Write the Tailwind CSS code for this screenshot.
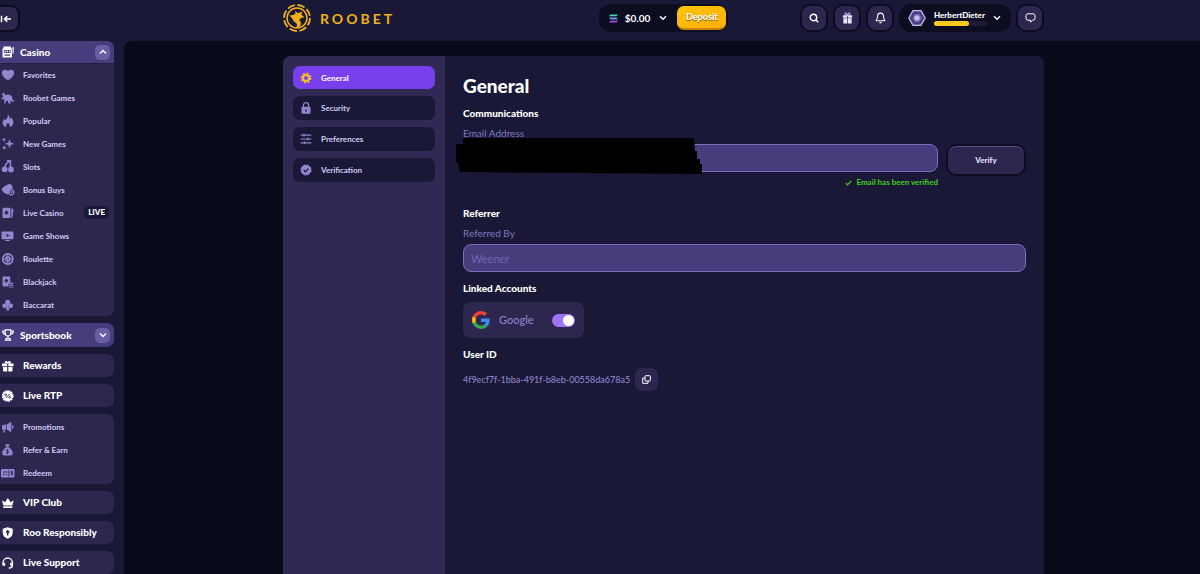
<!DOCTYPE html>
<html lang="en">
	<head>
		<meta charset="UTF-8" />
		<meta name="viewport" content="width=device-width, initial-scale=1.0" />
		<title>Roobet - General Settings</title>
		<script src="https://cdn.jsdelivr.net/npm/@tailwindcss/browser@4"></script>
	</head>
	<body class="bg-[#090b1b] text-white font-[Lato,'Noto_Sans',sans-serif] text-[8px] h-screen overflow-hidden flex flex-col">
		<!-- Top bar -->
		<header class="flex bg-[#191937] h-[41px] shrink-0">
			<div class="w-[124px] shrink-0 pt-[5px]">
				<button aria-label="Collapse menu" class="flex items-center w-[20px] h-[27px] rounded-r-[9px] border-[2px] border-l-0 border-[#0c0d20] bg-[#2d2750]">
					<svg class="w-[12px] h-[10px]" viewBox="0 0 12 10" fill="none" stroke="#fff" stroke-width="1.5">
						<path d="M1.5 1.8v6.4M11 5H5M7.3 2.2 4.5 5l2.8 2.8" />
					</svg>
				</button>
			</div>
			<div class="flex-1 flex justify-center pl-[3px]">
				<div class="w-full max-w-[761px] grid grid-cols-[1fr_auto_1fr] items-start pt-1">
					<a href="#" aria-label="Roobet home" class="flex items-center gap-[9px] text-[#efb01c]">
						<svg class="w-[28px] h-[28px]" viewBox="0 0 28 28" fill="none">
							<circle cx="14" cy="14" r="13" stroke="currentColor" stroke-width="1.8" stroke-dasharray="7.6 2.61" />
							<circle cx="14" cy="14" r="10" stroke="currentColor" stroke-width="1.5" />
							<path d="M6.500 11.500 10 11l2.500-1.200L12 6.800l2.500 2.200 4.800-1.200-1 2.700 3 2.700-3.300.8-1.800 2 1.800 2.500-.5 3.500-2 1.200-2.500.3 1.200-2.200-.7-1.800-2.800-2.300-2-3.500z" fill="currentColor" />
						</svg>
						<span class="text-[14px] font-bold tracking-[3px]">ROOBET</span>
					</a>
					<div class="flex items-center h-[28px] rounded-[12px] bg-[#0c0d20] pl-[10px] pr-[2px]">
						<svg class="w-[9px] h-[9px]" viewBox="0 0 9 9">
							<path d="M1.500.5H9L7.500 2.300H0z" fill="#2fe0b0" />
							<path d="M0 3.600h7.500L9 5.400H1.500z" fill="#6f95dc" />
							<path d="M1.500 6.700H9L7.500 8.500H0z" fill="#a44bf0" />
						</svg>
						<button class="flex items-center gap-[9px] ml-[7px] text-[10px] font-bold">
							$0.00
							<svg class="w-[8px] h-[6px]" viewBox="0 0 8 6" fill="none" stroke="#fff" stroke-width="1.4"><path d="m1 1.300 3 3 3-3" /></svg>
						</button>
						<button class="ml-[10px] w-[49px] h-[24px] rounded-[7px] bg-linear-to-br from-[#ffc400] to-[#ffae0d] border-b-2 border-[#c98208] text-[9px] font-black text-shadow-[0_1px_1px_#8a5a00]">Deposit</button>
					</div>
					<div class="flex justify-end gap-[5px]">
						<button aria-label="Search" class="grid place-items-center size-[28px] rounded-[10px] border-[2px] border-[#0c0d20] bg-[#2d2750]">
							<svg class="w-[10px] h-[10px]" viewBox="0 0 9 9" fill="none" stroke="#fff" stroke-width="1.3"><circle cx="4" cy="4" r="2.900" /><path d="m6 6 2.300 2.300" /></svg>
						</button>
						<button aria-label="Rewards" class="grid place-items-center size-[28px] rounded-[10px] border-[2px] border-[#0c0d20] bg-[#2d2750]">
							<svg class="w-[11px] h-[12px]" viewBox="0 0 10 11" fill="#e9e3ff">
								<path d="M.8 3h3.900v2.300H.8zM5.300 3h3.900v2.300H5.300zM1.200 5.700h3.500v4.800H1.200zM5.300 5.700h3.500v4.800H5.300z" />
								<path d="M5 3C3.500 3 2.300 2.300 2.700 1.200 3.300.2 4.600 1 5 3c.4-2 1.700-2.800 2.300-1.800C7.700 2.300 6.500 3 5 3z" fill="none" stroke="#e9e3ff" stroke-width=".8" />
							</svg>
						</button>
						<button aria-label="Notifications" class="grid place-items-center size-[28px] rounded-[10px] border-[2px] border-[#0c0d20] bg-[#2d2750]">
							<svg class="w-[11px] h-[12px]" viewBox="0 0 10 11" fill="none" stroke="#fff" stroke-width="1" stroke-linejoin="round"><path d="M5 1C3.200 1 2.300 2.400 2.300 4c0 2-.5 2.700-1.300 4h8C8.200 6.700 7.700 6 7.700 4 7.700 2.400 6.800 1 5 1zM4 9.700h2" /></svg>
						</button>
						<button class="flex items-center w-[112px] h-[28px] rounded-[12px] bg-[#0c0d20] pl-[9px]">
							<svg class="w-[18px] h-[16px]" viewBox="0 0 18 16">
								<path d="M5 .7h8L17.200 8 13 15.300H5L.8 8z" fill="#50468c" stroke="#c6bcf0" stroke-width="1.200" />
								<path d="M6.300 3h5.400l2.900 5-2.900 5H6.300L3.400 8z" fill="#6b60ab" stroke="#352d66" />
								<circle cx="9" cy="8" r="2.700" fill="#c4bbef" />
							</svg>
							<span class="ml-[8px] w-[53px] text-left">
								<span class="block text-[8px] leading-[11px] font-black">HerbertDieter</span>
								<span class="block h-[5px] rounded-full bg-[#1c1b3a]"><span class="block h-full w-2/3 rounded-full bg-[#fcc81b]"></span></span>
							</span>
							<svg class="ml-[6px] w-[8px] h-[6px]" viewBox="0 0 8 6" fill="none" stroke="#fff" stroke-width="1.400"><path d="m1 1.300 3 3 3-3" /></svg>
						</button>
						<button aria-label="Chat" class="grid place-items-center size-[28px] rounded-[10px] border-[2px] border-[#0c0d20] bg-[#2d2750]">
							<svg class="w-[11px] h-[10px]" viewBox="0 0 11 10" fill="none" stroke="#fff" stroke-linejoin="round"><path d="M3 .8h5a2 2 0 0 1 2 2v2.400a2 2 0 0 1-2 2H7.500L5.500 9.200V7.200H3a2 2 0 0 1-2-2V2.800a2 2 0 0 1 2-2z" /></svg>
						</button>
					</div>
				</div>
			</div>
		</header>

		<div class="flex flex-1 min-h-0 bg-[#191937]">
			<!-- Sidebar -->
			<aside class="w-[124px] shrink-0 pr-[10px] flex flex-col gap-[7px] font-bold text-[#d3caf5]">
				<section class="rounded-r-[7px] overflow-hidden bg-[#2d2750] shrink-0">
					<button class="flex items-center w-full h-[22px] pl-[2px] pr-[4px] bg-[#483d7c] text-[10px] font-black text-white">
						<svg class="w-[12px] h-[12px] mr-[6px]" viewBox="0 0 12 12" fill="#fff">
							<path fill-rule="evenodd" d="M1.500 .5h7.500v2H10v9H.5v-9h1zM1.800 4v3h7V4zM2.500 8.500v1.200h5.500V8.500z" />
							<path d="M2.500 4.700h1.300v1.600H2.500zM4.700 4.700H6v1.600H4.700zM6.900 4.700h1.300v1.600H6.900zM10.600 2.600h1v5h-1z" />
							<circle cx="11.100" cy="2" r=".9" />
						</svg>
						Casino
						<span class="ml-auto grid place-items-center size-[15px] rounded-[5px] bg-[#6a5da6]"><svg class="w-[8px] h-[6px]" viewBox="0 0 8 6" fill="none" stroke="#fff" stroke-width="1.400"><path d="m1 4.500 3-3 3 3" /></svg></span>
					</button>
					<nav class="inset-shadow-[0_1px_0_#231f45]">
						<a href="#" class="flex items-center h-[23px] pl-[1px] pr-[5px]">
							<svg class="w-[14px] h-[12px] mr-[8px]" viewBox="0 0 14 12" fill="#9385cf"><path d="M7 11.500C3 8.500.8 6.500.8 3.900.8 1 4.700-.4 7 2.300 9.300-.4 13.200 1 13.200 3.900c0 2.600-2.200 4.600-6.200 7.600z" /></svg>
							Favorites
						</a>
						<a href="#" class="flex items-center h-[23px] pl-[1px] pr-[5px]">
							<svg class="w-[14px] h-[12px] mr-[8px]" viewBox="0 0 14 12" fill="#9385cf"><path d="M.5 2.500 2 1.600l.3-1.400 1.200 1.500 1 1.600C6 2.500 8 2.200 9.500 3.200c1.500 1 2 2.600 2 4.200.5 1.500 1.600 1 2.200.300-.1 2-2 3-3.200 1.300L9 9.500l1.200 2H7.500L6.800 9 5 8.500l-.6 3H3.200l.2-3.500L2 6.500 1 7.700.3 7l1.500-2.200 1-.8z" /></svg>
							Roobet Games
						</a>
						<a href="#" class="flex items-center h-[23px] pl-[1px] pr-[5px]">
							<svg class="w-[14px] h-[14px] mr-[8px]" viewBox="0 0 14 13" fill="#9385cf"><path d="M6.800.3c2 1.500 1.900 3 1.900 4.200.8-.5 1-1 1.200-1.800 1.700 1.700 2.600 3.500 2.400 5.500-.2 2.500-2 4-3.500 4.500.8-1.800-.4-3-1.800-4.500-1.300 1.500-2.600 2.700-1.800 4.500C3.500 12.100 1.700 10.600 1.700 8.400c0-2 1-3 1.400-4.200.5.5.8 1 1.100 1.600C6 4.500 6.800 2.800 6.800.3z" /></svg>
							Popular
						</a>
						<a href="#" class="flex items-center h-[23px] pl-[1px] pr-[5px]">
							<svg class="w-[14px] h-[13px] mr-[8px]" viewBox="0 0 14 13" fill="#9385cf"><path d="m8.500 2 1.200 3.500 3.500 1.200-3.500 1.200-1.200 3.500-1.200-3.500-3.500-1.200 3.500-1.200zM3 .3l.6 1.800 1.800.6-1.800.6L3 5.100l-.6-1.800L.6 2.700l1.800-.6z" /><circle cx="3.200" cy="10.700" r="1.500" /></svg>
							New Games
						</a>
						<a href="#" class="flex items-center h-[23px] pl-[1px] pr-[5px]">
							<svg class="w-[14px] h-[13px] mr-[8px]" viewBox="0 0 14 13" fill="#9385cf"><circle cx="3.700" cy="9.300" r="2.900" /><circle cx="10" cy="9.500" r="2.900" /><path d="M6 .4 9.500 1v1.500L9.300 7M8.500 1.500C6 2.500 4.500 4 4 7" fill="none" stroke="#9385cf" stroke-width="1.500" /></svg>
							Slots
						</a>
						<a href="#" class="flex items-center h-[23px] pl-[1px] pr-[5px]">
							<svg class="w-[14px] h-[13px] mr-[8px]" viewBox="0 0 14 13" fill="#9385cf"><path d="M8 1c2.500 0 3.700 1.500 3.700 4.500L9 7l-1.500 4.500C4 11 .8 8.500.8 6.500S5 2.500 8 1z" /><circle cx="10.300" cy="9.300" r="2.500" fill="none" stroke="#9385cf" stroke-width="1.300" /><circle cx="10.300" cy="9.300" r="1" /></svg>
							Bonus Buys
						</a>
						<a href="#" class="flex items-center h-[23px] pl-[1px] pr-[5px]">
							<svg class="w-[14px] h-[12px] mr-[8px]" viewBox="0 0 14 12" fill="#9385cf"><rect x="1.500" y=".8" width="8" height="10.200" rx="1.200" /><path d="m10.300 1.500 2.200.6-1 8.500-1.200.3z" /><path d="M5.500 3.200c1 1.300 2 1.800 2 2.700 0 .8-1 1-1.600.5l.4 1.300H4.700l.4-1.300c-.6.5-1.600.3-1.600-.5 0-.9 1-1.400 2-2.700z" fill="#2d2750" /></svg>
							Live Casino
							<span class="ml-auto rounded-[5px] bg-[#191937] px-[4px] leading-[13px] font-black text-white">LIVE</span>
						</a>
						<a href="#" class="flex items-center h-[23px] pl-[1px] pr-[5px]">
							<svg class="w-[14px] h-[12px] mr-[8px]" viewBox="0 0 14 12" fill="#9385cf"><rect x=".5" y="1.500" width="12" height="7.700" rx="1" /><path d="M4.200 10h4.600v1H4.200z" /><path d="m5.600 3.800 3 1.600-3 1.600z" fill="#2d2750" /></svg>
							Game Shows
						</a>
						<a href="#" class="flex items-center h-[23px] pl-[1px] pr-[5px]">
							<svg class="w-[14px] h-[12px] mr-[8px]" viewBox="0 0 14 12" fill="none" stroke="#9385cf"><circle cx="6.800" cy="6" r="5" stroke-width="1.800" /><circle cx="6.800" cy="6" r="2.200" stroke-width="1.400" /><path d="M6.800 1v10M1.800 6h10" /></svg>
							Roulette
						</a>
						<a href="#" class="flex items-center h-[23px] pl-[1px] pr-[5px]">
							<svg class="w-[14px] h-[12px] mr-[8px]" viewBox="0 0 14 12" fill="#9385cf"><path d="M2.500.5h6.700v5.700L7.500 8v2.500h-5a1 1 0 0 1-1-1v-8a1 1 0 0 1 1-1z" /><ellipse cx="10.200" cy="7.500" rx="2.200" ry="1" /><path d="M8 8.700c1 .7 3.400.7 4.400 0v1c-1 .7-3.400.7-4.400 0zM8 10.500c1 .7 3.400.7 4.400 0v1H8z" /><path d="M5.300 2.500c1 1.300 2 1.700 2 2.600 0 .8-1 1-1.600.5L6 7H4.600l.3-1.400c-.6.5-1.600.3-1.600-.5 0-.9 1-1.300 2-2.600z" fill="#2d2750" /></svg>
							Blackjack
						</a>
						<a href="#" class="flex items-center h-[23px] pl-[1px] pr-[5px]">
							<svg class="w-[14px] h-[12px] mr-[8px]" viewBox="0 0 14 12" fill="#9385cf"><circle cx="6.700" cy="3.300" r="2.500" /><circle cx="3.700" cy="6.800" r="2.400" /><circle cx="9.700" cy="6.800" r="2.400" /><path d="M6 5h1.400l.3 4 .8 2.300H5L5.700 9z" /></svg>
							Baccarat
						</a>
					</nav>
				</section>

				<button class="flex items-center h-[24px] shrink-0 pl-[2px] pr-[4px] rounded-r-[7px] bg-[#483d7c] text-[10px] font-black text-white">
					<svg class="w-[12px] h-[12px] mr-[6px]" viewBox="0 0 12 12" fill="none" stroke="#fff" stroke-width="1.200"><path d="M3.200.9h5.600v3.300a2.800 2.800 0 0 1-5.600 0zM3.200 2H.7c0 2 .8 3 2.800 3.200M8.800 2h2.500c0 2-.8 3-2.800 3.200M6 7v2.500M3.500 11.200h5L8 9.500H4z" /></svg>
					Sportsbook
					<span class="ml-auto grid place-items-center size-[15px] rounded-[5px] bg-[#6a5da6]"><svg class="w-[8px] h-[6px]" viewBox="0 0 8 6" fill="none" stroke="#fff" stroke-width="1.400"><path d="m1 1.500 3 3 3-3" /></svg></span>
				</button>
				<a href="#" class="flex items-center h-[23px] shrink-0 pl-[1px] rounded-r-[7px] bg-[#2d2750] text-[10px] font-black text-white">
					<svg class="w-[14px] h-[12px] mr-[8px]" viewBox="0 0 14 12" fill="#fff"><path d="M1 3.500h5.200v2.700H1zM7.300 3.500h5.200v2.700H7.300zM2 7h4.200v4.500H3a1 1 0 0 1-1-1zM7.300 7h4.200v3.500a1 1 0 0 1-1 1H7.300z" /><path d="M3.500 3.500C3.300 1 5.500.3 6.800 2 8 .3 10.200 1 10 3.500z" /></svg>
					Rewards
				</a>
				<a href="#" class="flex items-center h-[23px] shrink-0 pl-[1px] rounded-r-[7px] bg-[#2d2750] text-[10px] font-black text-white">
					<svg class="w-[14px] h-[12px] mr-[8px]" viewBox="0 0 14 12"><circle cx="6.700" cy="6" r="4.900" fill="#fff" /><circle cx="6.700" cy="6" r="5.100" fill="none" stroke="#fff" stroke-width="1.500" stroke-dasharray="2 .67" /><g fill="none" stroke="#2d2750"><path d="m4.800 8 3.800-4" /><circle cx="4.700" cy="4.700" r=".8" /><circle cx="8.700" cy="7.300" r=".8" /></g></svg>
					Live RTP
				</a>
				<nav class="rounded-r-[7px] bg-[#2d2750] pt-px shrink-0">
					<a href="#" class="flex items-center h-[23px] pl-[1px]">
						<svg class="w-[14px] h-[12px] mr-[8px]" viewBox="0 0 14 12" fill="#9385cf"><path d="M1 4h1.500v4.200H1zM3 3.800 5 3.600v4.800H3.300L4.500 11.500H2.800L2 8.400zM5.600 3.500 10.300.8v10.400L5.600 8.500zM11 3.800c2 .8 2 3.600 0 4.400z" /></svg>
						Promotions
					</a>
					<a href="#" class="flex items-center h-[23px] pl-[1px]">
						<svg class="w-[14px] h-[12px] mr-[8px]" viewBox="0 0 14 12" fill="#9385cf"><path d="M4.200.3h4.400L7.800 2.700H5zM5 3.300h2.800c2.700 2 4 4 4 6 0 1.500-1 2.200-2.300 2.200h-6c-1.400 0-2.300-.7-2.300-2.200 0-2 1.200-4 3.800-6z" /><path d="M7.900 6.200C6.500 5.200 5 5.900 5.300 6.800c.3.800 2.200.5 2.400 1.400.2.900-1.400 1.300-2.700.5M6.500 5v5" fill="none" stroke="#2d2750" stroke-width=".8" /></svg>
						Refer &amp; Earn
					</a>
					<a href="#" class="flex items-center h-[23px] pl-[1px]">
						<svg class="w-[14px] h-[12px] mr-[8px]" viewBox="0 0 14 12" fill="#9385cf"><rect x="0" y="2" width="13.500" height="8.500" rx="1.200" /><path d="M2 5h4.500M2 7.500h2M5 7.500h1.500M8 3v6.500M11.800 4.800c-1-.6-2-.2-1.800.6.200.7 1.700.5 1.900 1.200.2.800-1 1.100-2 .5M11 3.800v4.500" fill="none" stroke="#2d2750" stroke-width=".9" /></svg>
						Redeem
					</a>
				</nav>
				<a href="#" class="flex items-center h-[23px] shrink-0 pl-[1px] rounded-r-[7px] bg-[#2d2750] text-[10px] font-black text-white">
					<svg class="w-[14px] h-[12px] mr-[8px]" viewBox="0 0 14 12" fill="#fff"><path d="m1 3.300 3 2L6.800 1l2.800 4.300 3-2-1.300 5.200h-9zM2.300 9.300h9V11h-9z" /></svg>
					VIP Club
				</a>
				<a href="#" class="flex items-center h-[23px] shrink-0 pl-[1px] rounded-r-[7px] bg-[#2d2750] text-[10px] font-black text-white">
					<svg class="w-[14px] h-[12px] mr-[8px]" viewBox="0 0 14 12" fill="#fff"><path d="M6.700.2 11.700 1.800v4c0 3-2 5-5 6-3-1-5-3-5-6v-4z" /><path d="M6.700 2.800 9 5.200 7.400 6v2.500H6V6L4.500 5.200z" fill="#2d2750" /></svg>
					Roo Responsibly
				</a>
				<a href="#" class="flex items-center h-[23px] shrink-0 pl-[1px] rounded-r-[7px] bg-[#2d2750] text-[10px] font-black text-white">
					<svg class="w-[14px] h-[12px] mr-[8px]" viewBox="0 0 14 12" fill="none" stroke="#fff" stroke-width="1.400"><path d="M2 8.500V5.700a4.700 4.700 0 0 1 9.400 0v2.800c0 1.500-1.500 2.500-3.700 2.500" /><path d="M3.200 5.700v3M10.200 5.700v3" stroke-width="2" /></svg>
					Live Support
				</a>
			</aside>

			<!-- Account settings -->
			<div class="flex-1 flex justify-center bg-[#090b1b] rounded-tl-[7px] pt-[15px] pl-[3px]">
				<main class="w-full max-w-[761px] flex rounded-t-[8px] overflow-hidden bg-[#191937]">
					<nav class="w-[162px] shrink-0 bg-[#2f2953] px-[10px] pt-[10px] flex flex-col gap-[7px] font-bold text-[#d3caf5]">
						<a href="#" class="flex items-center gap-[9px] h-[23px] px-[7px] rounded-[7px] bg-[#7840ec] text-white">
							<svg class="w-[12px] h-[12px]" viewBox="0 0 12 12" fill="none" stroke="#fcc419"><circle cx="6" cy="6" r="3" stroke-width="2" /><circle cx="6" cy="6" r="4.700" stroke-width="1.500" stroke-dasharray="1.900 1.790" /></svg>
							General
						</a>
						<a href="#" class="flex items-center gap-[9px] h-[24px] px-[7px] rounded-[7px] bg-[#191937]">
							<svg class="w-[12px] h-[12px]" viewBox="0 0 12 12"><path d="M3.400 5.500V3.300a2.600 2.600 0 0 1 5.200 0v2.200" fill="none" stroke="#9385cf" stroke-width="1.200" /><rect x="1.500" y="4.800" width="9" height="7" rx="1" fill="#9385cf" /><path d="M5.400 7.200h1.200v2.500H5.400z" fill="#191937" /></svg>
							Security
						</a>
						<a href="#" class="flex items-center gap-[9px] h-[24px] px-[7px] rounded-[7px] bg-[#191937]">
							<svg class="w-[12px] h-[12px]" viewBox="0 0 12 12" fill="none" stroke="#9385cf" stroke-width="1.200"><path d="M.7 2.200h10.600M.7 6h10.600M.7 9.800h10.600M4 .8v2.800M8 4.600v2.800M4.500 8.400v2.800" /></svg>
							Preferences
						</a>
						<a href="#" class="flex items-center gap-[9px] h-[24px] px-[7px] rounded-[7px] bg-[#191937]">
							<svg class="w-[12px] h-[12px]" viewBox="0 0 12 12" fill="none"><circle cx="6" cy="6" r="5" fill="#9385cf" /><circle cx="6" cy="6" r="5.100" stroke="#9385cf" stroke-dasharray="2.500 1.500" /><path d="m3.700 6.100 1.700 1.700 3-3.200" stroke="#191937" stroke-width="1.300" /></svg>
							Verification
						</a>
					</nav>

					<div class="flex-1 px-[18px] pt-[18px]">
						<h1 class="text-[19px] leading-[24px] font-black">General</h1>

						<h2 class="mt-[9px] text-[10px] leading-[12px] font-black">Communications</h2>
						<label for="email" class="block mt-[8px] text-[10px] leading-[13px] text-[#8376bf]">Email Address</label>
						<div class="mt-[4px] flex gap-[8px]">
							<div class="flex-1">
								<div class="relative">
									<input id="email" type="email" readonly class="block w-full h-[28px] rounded-[8px] border border-[#7a6dbb] bg-[#483d7c] px-[7px]" />
									<!-- blacked out address -->
									<div class="absolute left-[-7px] top-[-6px] w-[246px] h-[36px] bg-black [clip-path:polygon(7px_0,238px_0,239px_13px,241px_13px,241px_21px,244px_21px,244px_26px,246px_26px,246px_36px,4px_34px,2px_25px,0_24px,0_6px,7px_6px)]"></div>
								</div>
								<p class="mt-[4px] flex items-center justify-end gap-[4px] leading-[13px] font-bold text-[#42cf1a]">
									<svg class="w-[7px] h-[6px]" viewBox="0 0 7 6" fill="none" stroke="currentColor" stroke-width="1.200"><path d="m.8 3 1.700 1.800L6.300.8" /></svg>
									Email has been verified
								</p>
							</div>
							<button class="w-[80px] h-[32px] rounded-[10px] border-[2px] border-[#0c0d20] bg-[#2d2750] text-[#e6dfff] font-black inset-shadow-[0_1px_0_#5a4f8c]">Verify</button>
						</div>

						<h2 class="mt-[18px] text-[10px] leading-[12px] font-black">Referrer</h2>
						<label for="referrer" class="block mt-[8px] text-[10px] leading-[13px] text-[#8376bf]">Referred By</label>
						<input id="referrer" type="text" placeholder="Weener" class="block mt-[4px] w-full h-[28px] rounded-[8px] border border-[#7a6dbb] bg-[#483d7c] px-[7px] text-[11px] placeholder:text-[#7366b0]" />

						<h2 class="mt-[10px] text-[10px] leading-[12px] font-black">Linked Accounts</h2>
						<div class="mt-[8px] flex items-center w-[121px] h-[36px] rounded-[8px] bg-[#2d2750] px-[9px]">
							<svg class="w-[18px] h-[18px]" viewBox="0 0 48 48">
								<path fill="#ea4335" d="M24 9.500c3.540 0 6.710 1.220 9.210 3.600l6.850-6.850C35.900 2.380 30.470 0 24 0 14.620 0 6.510 5.380 2.560 13.220l7.980 6.190C12.430 13.720 17.740 9.500 24 9.500z" />
								<path fill="#4285f4" d="M46.980 24.550c0-1.570-.15-3.090-.38-4.550H24v9.020h12.940c-.58 2.960-2.260 5.480-4.780 7.180l7.730 6c4.510-4.180 7.090-10.360 7.090-17.650z" />
								<path fill="#fbbc05" d="M10.530 28.590c-.48-1.450-.76-2.990-.76-4.590s.27-3.140.76-4.590l-7.980-6.190C.92 16.460 0 20.120 0 24c0 3.880.92 7.540 2.560 10.780l7.970-6.190z" />
								<path fill="#34a853" d="M24 48c6.480 0 11.930-2.130 15.890-5.810l-7.730-6c-2.150 1.450-4.920 2.300-8.160 2.300-6.260 0-11.570-4.220-13.470-9.910l-7.980 6.190C6.510 42.620 14.620 48 24 48z" />
							</svg>
							<label for="google" class="ml-[9px] text-[11px] font-medium text-[#8f82cb]">Google</label>
							<input id="google" type="checkbox" role="switch" checked class="ml-auto appearance-none flex items-center justify-end w-[23px] h-[13px] rounded-full bg-[#9f75f5] before:size-[11px] before:rounded-full before:bg-white before:mr-px" />
						</div>

						<h2 class="mt-[10px] text-[10px] leading-[12px] font-black">User ID</h2>
						<div class="mt-[8px] flex items-center gap-[5px] text-[9px] font-medium text-[#8f82cb]">
							4f9ecf7f-1bba-491f-b8eb-00558da678a5
							<button aria-label="Copy user ID" class="grid place-items-center size-[23px] rounded-[7px] bg-[#2d2750]">
								<svg class="w-[9px] h-[9px]" viewBox="0 0 9 9" fill="none" stroke="#fff"><rect x="3" y=".7" width="5.300" height="5.300" rx=".5" /><path d="M3 3H.7v5.300H6V6" /></svg>
							</button>
						</div>
					</div>
				</main>
			</div>
		</div>
	</body>
</html>
